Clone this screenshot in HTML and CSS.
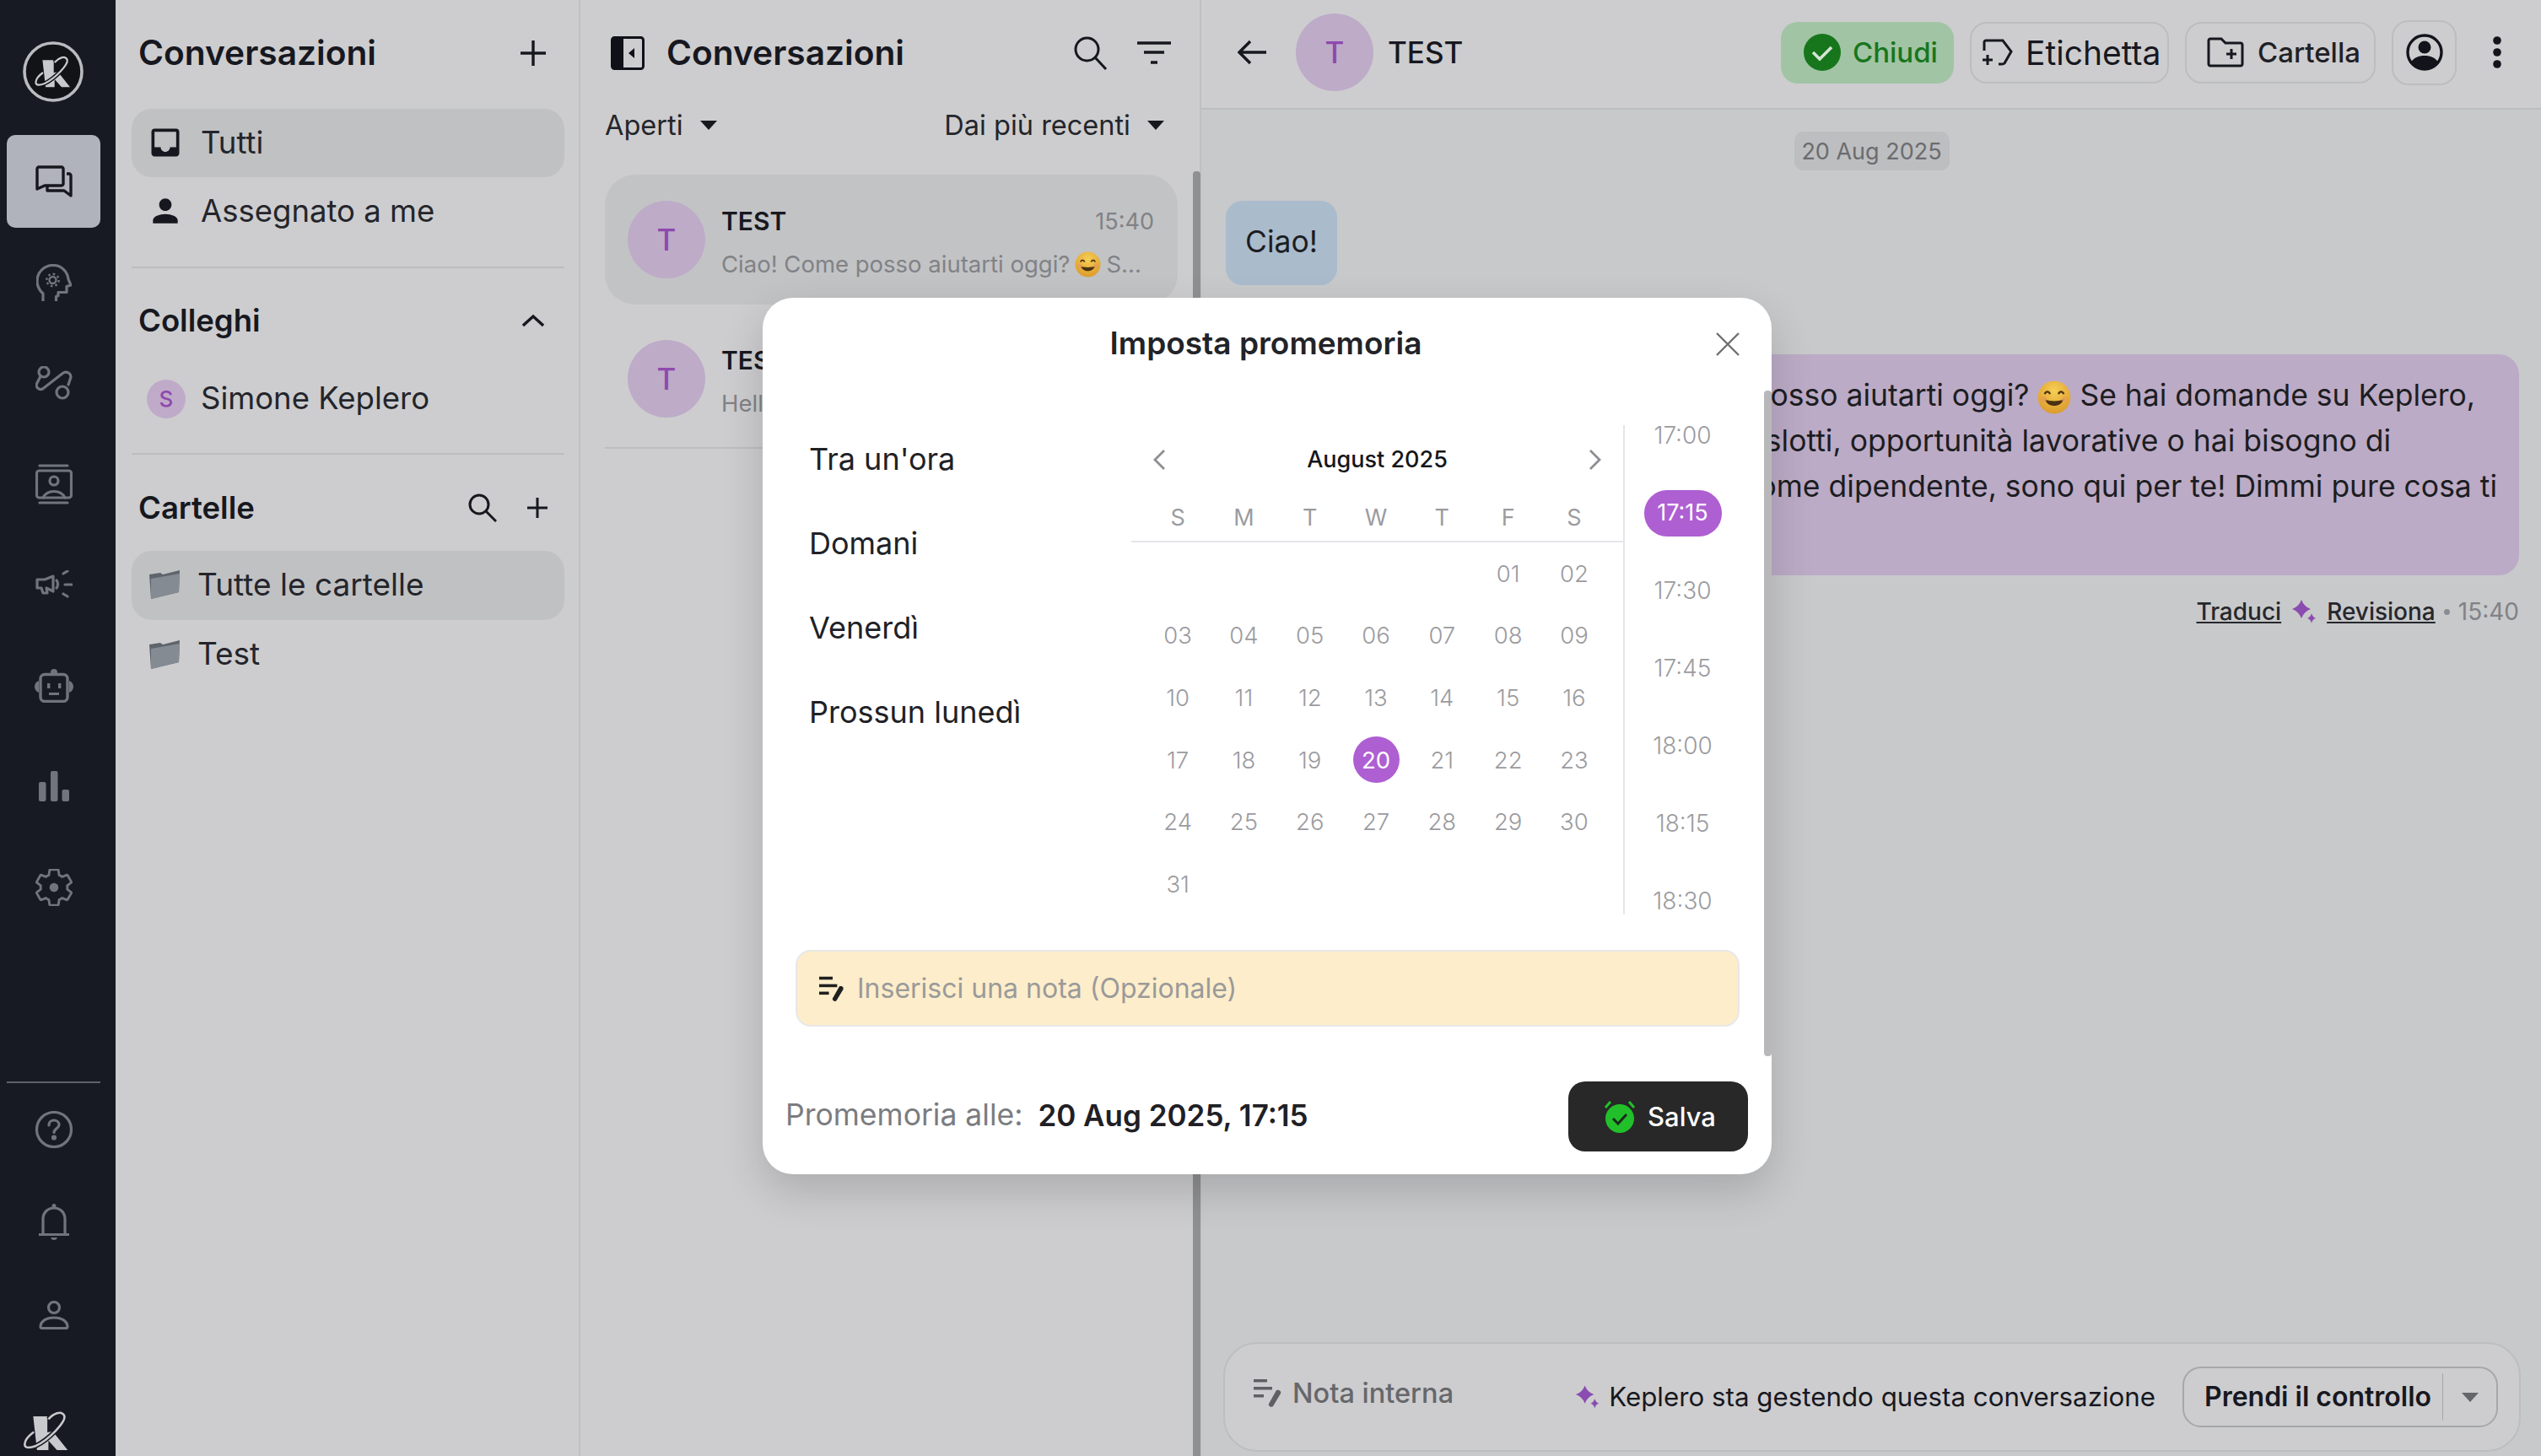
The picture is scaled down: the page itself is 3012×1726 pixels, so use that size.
FILE: index.html
```html
<!DOCTYPE html>
<html lang="it">
<head>
<meta charset="utf-8">
<title>Conversazioni</title>
<link rel="stylesheet" href="styles.css">
</head>
<body>
<div class="app">
  <nav class="rail">
    <svg class="rail-logo" width="72" height="72" viewBox="0 0 72 72"><circle cx="36" cy="36" r="34" fill="#121317" stroke="#b9bbc0" stroke-width="3.6"/><path d="M23.400 22.300h13.300v15l5-1 14.300 18h-10l-8.300-9.300v9.300H27z" fill="#c9cacd"/><path d="M37.700 25C42 20 50 16 52.700 22 54 28 38 44 26 50 18 53 14 52 16 46 17 43 20 40 24 37" fill="none" stroke="#121317" stroke-width="5"/><path d="M37.700 25C42 20 50 16 52.700 22 54 28 38 44 26 50 18 53 14 52 16 46 17 43 20 40 24 37" fill="none" stroke="#c9cacd" stroke-width="2.200"/></svg>
    <div class="rail-nav">
      <a class="rail-btn rail-btn-on"><svg width="44" height="38" viewBox="0 0 44 38" fill="none" stroke="#17181f" stroke-width="3.400" stroke-linejoin="round"><path d="M2 4c0-1 1-2 2-2h27c1 0 2 1 2 2v18c0 1-1 2-2 2H11l-9 4z"/><path d="M37 10h3c1 0 2 1 2 2v24l-8-6H14v-5" /></svg></a>
      <a class="rail-btn"><svg class="ri" width="42" height="44" viewBox="0 0 42 44"><path d="M8 43v-8C3.500 31 1 26 1 20 1 9 10 1.500 20 1.500c10 0 17 7.500 18 16.500l3 7-5 1.500v7H26v4l-2.500 1v5"/><circle class="ri-hub" cx="19.500" cy="19" r="4"/><circle class="ri-teeth" cx="19.500" cy="19" r="7.200"/></svg></a>
      <a class="rail-btn"><svg class="ri" width="44" height="40" viewBox="0 0 44 40"><circle cx="10" cy="7" r="6"/><circle cx="32" cy="31" r="7"/><path d="M6 12 1.500 21c-1.500 4 3 8 7 6L33 8c4-2.500 9 .5 9 5l-3 9"/></svg></a>
      <a class="rail-btn"><svg class="ri" width="44" height="48" viewBox="0 0 44 48"><path d="M5 2h33M5 46h33"/><rect x="1.500" y="8" width="41" height="32" rx="3"/><circle cx="22" cy="20" r="5"/><path d="M9 40c5-10 21-10 26 0"/></svg></a>
      <a class="rail-btn"><svg class="ri" width="44" height="34" viewBox="0 0 44 34"><path d="M11 11H2v10h5l2 6h5l-1-6 8 4V7z" /><path d="M25 12c2 2 2 7 0 9"/><path d="M33 4l5-3M35 17h8M33 28l5 3"/></svg></a>
      <a class="rail-btn"><svg width="46" height="40" viewBox="0 0 46 40" fill="#70757c"><rect x="7" y="6.500" width="32" height="32" rx="5" fill="none" stroke="#70757c" stroke-width="3.400"/><circle cx="23" cy="4" r="4"/><path d="M5 14C2 15 0 18 0 21s2 6 5 7zM41 14c3 1 5 4 5 7s-2 6-5 7z"/><rect x="15" y="17" width="3.400" height="6"/><rect x="28" y="17" width="3.400" height="6"/><rect x="17" y="28" width="12" height="3"/></svg></a>
      <a class="rail-btn"><svg width="36" height="36" viewBox="0 0 36 36" fill="#70757c"><rect x="0" y="13" width="8.500" height="23" rx="2"/><rect x="14" y="0" width="8.500" height="36" rx="2"/><rect x="27.500" y="22" width="8.500" height="14" rx="2"/></svg></a>
      <a class="rail-btn"><svg class="ri ri-gear" width="44" height="44" viewBox="2 2 20 20"><path d="M19.140 12.940c.04-.3.06-.61.06-.94 0-.32-.02-.64-.07-.94l2.030-1.580c.18-.14.23-.41.12-.61l-1.920-3.320c-.12-.22-.37-.29-.59-.22l-2.390.96c-.5-.38-1.030-.7-1.620-.94l-.36-2.540c-.04-.24-.24-.41-.48-.41h-3.840c-.24 0-.43.17-.47.41l-.36 2.540c-.59.24-1.130.57-1.620.94l-2.390-.96c-.22-.08-.47 0-.59.22L2.740 8.870c-.12.21-.08.47.12.61l2.030 1.580c-.05.3-.09.63-.09.94s.02.64.07.94l-2.030 1.580c-.18.14-.23.41-.12.61l1.920 3.320c.12.22.37.29.59.22l2.390-.96c.5.38 1.030.7 1.620.94l.36 2.540c.05.24.24.41.48.41h3.840c.24 0 .44-.17.47-.41l.36-2.540c.59-.24 1.130-.56 1.620-.94l2.390.96c.22.08.47 0 .59-.22l1.920-3.320c.12-.22.07-.47-.12-.61l-2.010-1.580z"/><circle cx="12" cy="12" r="2.400" fill="#70757c" stroke="none"/></svg></a>
    </div>
    <div class="rail-foot">
      <a class="rail-btn"><svg class="ri" width="44" height="44" viewBox="0 0 44 44"><circle cx="22" cy="22" r="20.500"/><path d="M16 17c0-4 3-6 6-6s6 2 6 5.500c0 4-6 4.500-6 9"/><circle cx="22" cy="31.500" r="1.500" fill="#70757c"/></svg></a>
      <a class="rail-btn"><svg class="ri" width="36" height="46" viewBox="0 0 36 46"><path d="M0 37.500h36"/><path d="M5 37V19C5 11 11 6 18 6s13 5 13 13v18"/><circle cx="18" cy="3.500" r="2.500" fill="#70757c" stroke="none"/><path d="M14 41h8c-1 4-7 4-8 0z" fill="#70757c" stroke="none"/></svg></a>
      <a class="rail-btn"><svg class="ri" width="36" height="34" viewBox="0 0 36 34"><circle cx="18" cy="8" r="6.500"/><path d="M2 31c0-7 7-11 16-11s16 4 16 11c0 1-1 1.500-2 1.500H4c-1 0-2-.5-2-1.500z"/></svg></a>
      <svg class="rail-mark" width="56" height="48" viewBox="13 16 44 38"><path d="M23.400 22.300h13.300v15l5-1 14.300 18h-10l-8.300-9.300v9.300H27z" fill="#c9cacd"/><path d="M37.700 25C42 20 50 16 52.700 22 54 28 38 44 26 50 18 53 14 52 16 46 17 43 20 40 24 37" fill="none" stroke="#181a23" stroke-width="4.500"/><path d="M37.700 25C42 20 50 16 52.700 22 54 28 38 44 26 50 18 53 14 52 16 46 17 43 20 40 24 37" fill="none" stroke="#c9cacd" stroke-width="2"/></svg>
    </div>
  </nav>

  <aside class="side">
    <div class="side-head">
      <h1 class="title">Conversazioni</h1>
      <svg class="si" width="34" height="34" viewBox="0 0 34 34"><path d="M17 2v30M2 17h30"/></svg>
    </div>
    <a class="side-row side-row-on"><svg width="44" height="44" viewBox="0 0 24 24" fill="#17181f"><path d="M19 3H5c-1.100 0-2 .9-2 2v14c0 1.100.9 2 2 2h14c1.100 0 2-.9 2-2V5c0-1.100-.9-2-2-2zm0 12h-4c0 1.660-1.350 3-3 3s-3-1.340-3-3H5V5h14v10z"/></svg><span>Tutti</span></a>
    <a class="side-row"><svg width="44" height="44" viewBox="0 0 24 24" fill="#17181f"><path d="M12 12c2.210 0 4-1.790 4-4s-1.790-4-4-4-4 1.790-4 4 1.790 4 4 4zm0 2c-2.670 0-8 1.340-8 4v2h16v-2c0-2.660-5.330-4-8-4z"/></svg><span>Assegnato a me</span></a>
    <hr class="rule rule-a">
    <div class="sec-head sec-head-a">
      <h2 class="sec-title">Colleghi</h2>
      <svg class="si" width="26" height="16" viewBox="0 0 26 16"><path d="M1 14 13 3l12 11"/></svg>
    </div>
    <a class="side-row"><span class="mini-ava">S</span><span>Simone Keplero</span></a>
    <hr class="rule rule-b">
    <div class="sec-head sec-head-b">
      <h2 class="sec-title">Cartelle</h2>
      <span class="sec-tools">
        <svg class="si si-thin" width="34" height="34" viewBox="0 0 34 34"><circle cx="13" cy="13" r="11"/><path d="m21 21 12 12"/></svg>
        <svg class="si si-thin" width="26" height="26" viewBox="0 0 26 26"><path d="M13 1v24M1 13h24"/></svg>
      </span>
    </div>
    <a class="side-row side-row-on folder"><svg width="38" height="36" viewBox="0 0 38 36"><path d="M1 7l13-2 3 2 20-5-1 26-33 8z" fill="#5e646c"/><path d="M3 12l34-6-1 22-33 8z" fill="#858b93"/></svg><span>Tutte le cartelle</span></a>
    <a class="side-row folder"><svg width="38" height="36" viewBox="0 0 38 36"><path d="M1 7l13-2 3 2 20-5-1 26-33 8z" fill="#5e646c"/><path d="M3 12l34-6-1 22-33 8z" fill="#858b93"/></svg><span>Test</span></a>
  </aside>

  <section class="list">
    <div class="list-head">
      <svg width="40" height="40" viewBox="0 0 40 40"><rect x="1.500" y="1.500" width="37" height="37" rx="3" fill="none" stroke="#101118" stroke-width="3"/><path d="M2 2h13v36H2z" fill="#101118"/><path d="M28 14v12l-7-6z" fill="#101118"/></svg>
      <h1 class="title list-title">Conversazioni</h1>
      <svg class="si si-thin list-search" width="40" height="40" viewBox="0 0 40 40"><circle cx="15.500" cy="15.500" r="13.500"/><path d="m25 25 13 14"/></svg>
      <svg class="si list-filter" width="40" height="28" viewBox="0 0 40 28"><path d="M0 2h40M8 13h24M16 25h8"/></svg>
    </div>
    <div class="list-filters">
      <span class="drop">Aperti<i class="caret"></i></span>
      <span class="drop">Dai più recenti<i class="caret"></i></span>
    </div>
    <article class="conv conv-on">
      <span class="ava">T</span>
      <div class="conv-main">
        <div class="conv-top"><b>TEST</b><time>15:40</time></div>
        <p class="conv-text">Ciao! Come posso aiutarti oggi? <svg class="emo" width="31" height="31" viewBox="0 0 32 32"><use href="#smile"/></svg> S...</p>
      </div>
    </article>
    <article class="conv conv-last">
      <span class="ava">T</span>
      <div class="conv-main">
        <div class="conv-top"><b>TEST</b></div>
        <p class="conv-text">Hello</p>
      </div>
    </article>
    <i class="list-scroll"></i>
  </section>

  <main class="chat">
    <header class="chat-head">
      <svg class="si back" width="34" height="30" viewBox="0 0 34 30"><path d="M15 2 2 15l13 13M2 15h32"/></svg>
      <span class="ava">T</span>
      <h2 class="chat-name">TEST</h2>
      <div class="chat-actions">
        <button class="btn btn-close"><svg width="44" height="44" viewBox="0 0 44 44"><circle cx="22" cy="22" r="22" fill="#17761b"/><path d="m11 22 8 8 14-14" fill="none" stroke="#d5e6d5" stroke-width="3.600"/></svg>Chiudi</button>
        <button class="btn btn-tag"><svg class="si si-icon" width="36" height="32" viewBox="0 0 36 32"><path d="M2 14V4c0-1 1-2 2-2h20l10 13-8 14c-1 1-2 1-3 1h-4"/><path d="M6 19v12M0 25h12"/></svg>Etichetta</button>
        <button class="btn btn-dir"><svg class="si si-icon" width="44" height="36" viewBox="0 0 44 36"><path d="M2 4c0-1 1-2 2-2h13l5 5h18c1 0 2 1 2 2v23c0 1-1 2-2 2H4c-1 0-2-1-2-2z"/><path d="M29 14v12M23 20h12"/></svg>Cartella</button>
        <button class="btn btn-user"><svg width="44" height="44" viewBox="0 0 44 44"><circle cx="22" cy="22" r="20" fill="none" stroke="#13141b" stroke-width="3.400"/><circle cx="22" cy="16" r="7.500" fill="#13141b"/><path d="M5 35c4-7 10-9 17-9s13 2 17 9c-4 5-10 8-17 8S9 40 5 35z" fill="#13141b"/></svg></button>
        <svg class="dots" width="12" height="38" viewBox="0 0 12 38" fill="#13141b"><circle cx="6" cy="5" r="4.800"/><circle cx="6" cy="19" r="4.800"/><circle cx="6" cy="33" r="4.800"/></svg>
      </div>
    </header>
    <div class="thread">
      <span class="date-pill">20 Aug 2025</span>
      <div class="bubble bubble-in">Ciao!</div>
      <div class="bubble bubble-out">
        <div class="line line-1">Ciao! Come posso aiutarti oggi? <svg class="emo emo-big" width="40" height="40" viewBox="0 0 32 32"><use href="#smile"/></svg> Se hai domande su Keplero,</div>
        <div class="line line-2">sugli slotti, opportunità lavorative o hai bisogno di</div>
        <div class="line line-3">supporto come dipendente, sono qui per te! Dimmi pure cosa ti</div>
      </div>
      <div class="meta"><u>Traduci</u><svg class="spark" width="30" height="30" viewBox="0 0 30 30" fill="#8a4cb0"><path d="M12 1Q15 9 23 12 15 15 12 23 9 15 1 12 9 9 12 1zM24 17Q25 21 29 23 25 24 24 29 23 24 19 23 23 21 24 17z"/></svg><u>Revisiona</u><i class="meta-dot"></i><time>15:40</time></div>
    </div>
    <div class="composer">
      <span class="note-tab"><svg width="36" height="36" viewBox="0 0 36 36" fill="#5f6063"><rect x="0" y="2" width="16" height="3.500"/><rect x="0" y="11" width="22" height="3.500"/><rect x="0" y="20" width="12" height="3.500"/><path d="M27 15c3-1 6 1 5 4L23 34c-2 2-6 0-5-3z"/></svg>Nota interna</span>
      <span class="ai-state"><svg width="40" height="38" viewBox="0 0 30 30" fill="#8a4cb0"><path d="M12 1Q15 9 23 12 15 15 12 23 9 15 1 12 9 9 12 1zM24 17Q25 21 29 23 25 24 24 29 23 24 19 23 23 21 24 17z"/></svg>Keplero sta gestendo questa conversazione</span>
      <div class="take"><span class="take-label">Prendi il controllo</span><span class="take-more"><i class="caret caret-grey"></i></span></div>
    </div>
  </main>
</div>

<div class="modal" role="dialog">
  <div class="modal-head">
    <h2 class="modal-title">Imposta promemoria</h2>
    <svg class="modal-close" width="28" height="28" viewBox="0 0 28 28"><path d="m1 1 26 26M27 1 1 27"/></svg>
  </div>
  <div class="modal-body">
    <ul class="quick">
      <li>Tra un'ora</li>
      <li>Domani</li>
      <li>Venerdì</li>
      <li>Prossun lunedì</li>
    </ul>
    <div class="cal">
      <div class="cal-head">
        <svg class="chev" width="16" height="26" viewBox="0 0 16 26"><path d="M14 2 3 13l11 11"/></svg>
        <span class="cal-month">August 2025</span>
        <svg class="chev" width="16" height="26" viewBox="0 0 16 26"><path d="m2 2 11 11L2 24"/></svg>
      </div>
      <div class="cal-week"><span>S</span><span>M</span><span>T</span><span>W</span><span>T</span><span>F</span><span>S</span></div>
      <div class="cal-days">
        <span></span><span></span><span></span><span></span><span></span><span>01</span><span>02</span>
        <span>03</span><span>04</span><span>05</span><span>06</span><span>07</span><span>08</span><span>09</span>
        <span>10</span><span>11</span><span>12</span><span>13</span><span>14</span><span>15</span><span>16</span>
        <span>17</span><span>18</span><span>19</span><span><b class="day-on">20</b></span><span>21</span><span>22</span><span>23</span>
        <span>24</span><span>25</span><span>26</span><span>27</span><span>28</span><span>29</span><span>30</span>
        <span>31</span>
      </div>
    </div>
    <div class="times">
      <span>17:00</span>
      <span><b class="time-on">17:15</b></span>
      <span>17:30</span>
      <span>17:45</span>
      <span>18:00</span>
      <span>18:15</span>
      <span>18:30</span>
    </div>
  </div>
  <div class="modal-note"><svg width="32" height="32" viewBox="0 0 36 36" fill="#1f1f1f"><rect x="0" y="2" width="18" height="4"/><rect x="0" y="12" width="24" height="4"/><rect x="0" y="22" width="13" height="4"/><path d="M27 15c3-1 6 1 5 4L23 34c-2 2-6 0-5-3z"/></svg><span>Inserisci una nota (Opzionale)</span></div>
  <div class="modal-foot">
    <span class="when-label">Promemoria alle:</span>
    <span class="when-value">20 Aug 2025, 17:15</span>
    <button class="save"><svg width="40" height="40" viewBox="0 0 40 40"><path d="M3 9l6-7M37 9l-6-7" stroke="#21c02a" stroke-width="3" fill="none"/><circle cx="20" cy="22" r="17" fill="#21c02a"/><path d="m12 22 6 6 10-11" fill="none" stroke="#1d2a1d" stroke-width="3"/></svg>Salva</button>
  </div>
  <i class="modal-scroll"></i>
</div>

<svg class="defs" width="0" height="0" aria-hidden="true"><defs>
  <radialGradient id="emoFill" cx=".5" cy=".3" r=".8"><stop offset="0" stop-color="#f6cf55"/><stop offset="1" stop-color="#d99425"/></radialGradient>
  <symbol id="smile" viewBox="0 0 32 32"><circle cx="16" cy="16" r="15.500" fill="url(#emoFill)"/><path d="M7 13c1-3 4-3 5 0M20 13c1-3 4-3 5 0" fill="none" stroke="#4a3213" stroke-width="1.800"/><path d="M7 18c3 8 15 8 18 0-5 2-13 2-18 0z" fill="#4a3213"/><circle cx="6" cy="18" r="3" fill="#e59a5c" opacity=".6"/><circle cx="26" cy="18" r="3" fill="#e59a5c" opacity=".6"/></symbol>
</defs></svg>
</body>
</html>
```
FILE: styles.css
```css
* { box-sizing: border-box; }
html, body { margin: 0; height: 100%; }
body {
  position: relative;
  width: 3012px;
  height: 1726px;
  overflow: hidden;
  background: #cdcdcf;
  font-family: Inter, "Liberation Sans", sans-serif;
  color: #17181f;
}
h1, h2, p, ul { margin: 0; padding: 0; list-style: none; }
button { font: inherit; color: inherit; background: none; border: 0; padding: 0; }
.defs { position: absolute; }

.app { display: grid; grid-template-columns: 137px 551px 736px 1fr; height: 1726px; }

/* rail */
.rail { background: #181a23; display: flex; flex-direction: column; align-items: flex-start; height: 1726px; overflow: hidden; padding-left: 8px; }
.rail-logo { margin: 49px 0 39px 19px; flex: none; }
.rail-nav { display: flex; flex-direction: column; gap: 9.500px; }
.rail-btn { width: 111px; height: 110px; display: flex; align-items: center; justify-content: center; border-radius: 10px; flex: none; }
.rail-btn-on { background: #b0b3bb; }
.ri { fill: none; stroke: #70757c; stroke-width: 3.200; stroke-linejoin: round; stroke-linecap: round; }
.ri-gear { stroke-width: 1.300; }
.ri-hub { stroke-width: 2.400; }
.ri-teeth { stroke-width: 2.400; stroke-dasharray: 2.600 3.050; stroke-linecap: butt; }
.rail-foot { margin-top: auto; border-top: 2px solid #5d626b; display: flex; flex-direction: column; width: 111px; height: 444px; }
.rail-mark { margin: 57px 0 0 18px; flex: none; }

/* side panel */
.side { border-right: 2px solid #bfc0c2; padding: 0 17px 0 19px; }
.side-head { height: 129px; padding: 0 20px 3px 8px; display: flex; align-items: center; justify-content: space-between; }
.title { font-size: 40.700px; font-weight: 600; line-height: 50px; }
.si { fill: none; stroke: #17181f; stroke-width: 3.400; flex: none; }
.si-thin { stroke-width: 3; }
.side-row { display: flex; align-items: center; gap: 20px; height: 81px; padding: 0 0 2px 18px; font-size: 36.500px; border-radius: 24px; color: #24252b; }
.side-row-on { background: #c0c1c3; }
.folder { height: 82px; padding-left: 20px; padding-bottom: 4px; font-size: 37px; }
.folder + .folder { height: 81px; padding-bottom: 2px; }
.rule { border: 0; height: 2px; background: #bdbdc0; margin: 0; }
.rule-a { margin-top: 25px; }
.rule-b { margin-top: 24px; }
.sec-head { display: flex; align-items: center; justify-content: space-between; height: 48px; padding: 0 24px 1px 8px; }
.sec-head-a { margin: 38px 0 28px; }
.sec-head-b { margin: 39px 0 27px; padding-right: 19px; }
.sec-title { font-size: 36.500px; font-weight: 600; }
.sec-tools { display: flex; align-items: center; gap: 35px; }
.mini-ava { width: 46px; height: 46px; border-radius: 50%; background: #bfabc9; color: #8e49ad; font-size: 26px; font-weight: 500; display: flex; align-items: center; justify-content: center; margin: 2px -2px 0 0; }

/* list */
.list { position: relative; border-right: 2px solid #bfc0c2; padding: 0 0 0 29px; }
.list-head { height: 126px; display: flex; align-items: center; padding-left: 7px; }
.list-title { margin-left: 26px; }
.list-search { margin-left: 201px; }
.list-filter { margin-left: 35px; }
.list-filters { display: flex; justify-content: space-between; height: 44px; align-items: center; width: 663px; font-size: 32.500px; margin-bottom: 37px; color: #24252b; }
.drop { display: flex; align-items: center; gap: 20px; }
.caret { width: 0; height: 0; border: 10px solid transparent; border-top: 11px solid #17181f; border-bottom: 0; display: block; }
.conv { display: flex; width: 679px; padding: 31px 28px 0 27px; height: 154px; gap: 19px; border-radius: 36px; }
.conv-on { background: #c2c3c5; }
.conv-last { height: 171px; border-bottom: 2px solid #bdbdc0; border-radius: 0; padding-top: 42px; }
.ava { width: 92px; height: 92px; flex: none; border-radius: 50%; background: #bdabc8; color: #8e49ad; font-size: 35px; font-weight: 500; display: flex; align-items: center; justify-content: center; }
.conv-main { flex: 1; min-width: 0; padding-top: 2px; }
.conv-top { display: flex; justify-content: space-between; align-items: center; height: 44px; font-size: 30px; }
.conv-top b { font-weight: 600; }
.conv-top time { font-size: 27px; color: #818286; }
.conv-text { font-size: 27.500px; color: #818286; margin-top: 9px; line-height: 40px; white-space: nowrap; display: flex; align-items: center; gap: 6px; }
.emo { flex: none; vertical-align: -6px; }
.emo-big { vertical-align: -10px; }
.list-scroll { position: absolute; left: 726px; top: 203px; bottom: 0; width: 9px; background: #8f9092; border-radius: 4px 4px 0 0; }

/* chat */
.chat { display: flex; flex-direction: column; min-width: 0; background: #c8c9cb; height: 1726px; }
.chat-head { flex: none; height: 130px; background: #cdcdcf; border-bottom: 2px solid #bcbdbf; display: flex; align-items: center; padding: 0 0 4px 43px; }
.back { margin-right: 35px; }
.chat-name { font-size: 35px; font-weight: 500; margin-left: 17px; }
.chat-actions { margin-left: auto; display: flex; align-items: center; gap: 19px; padding-right: 46px; }
.btn { height: 73px; border-radius: 20px; border: 2px solid #bcbdbf; display: flex; align-items: center; font-size: 36px; }
.btn-close { width: 205px; background: #a1c4a5; border: 0; color: #17761b; gap: 14px; padding-left: 27px; font-size: 33px; font-weight: 500; }
.btn-tag { width: 236px; gap: 15px; padding-left: 13px; font-size: 39px; }
.btn-dir { width: 226px; gap: 16px; padding-left: 24px; font-size: 33px; font-weight: 500; color: #1f2026; }
.si-icon { stroke-width: 3; }
.btn-user { width: 77px; height: 77px; justify-content: center; }
.dots { margin-left: 23px; }
.thread { flex: 1; display: flex; flex-direction: column; padding: 26px 26px 0 29px; min-height: 0; }
.date-pill { align-self: center; height: 46px; width: 184px; margin-left: -2px; border-radius: 10px; background: #bdbec0; color: #6b6c70; font-size: 27px; display: flex; align-items: center; justify-content: center; }
.bubble { color: #1c1d22; font-size: 35.500px; }
.bubble-in { margin-top: 36px; width: 132px; height: 100px; background: #aabbcc; border-radius: 20px; display: flex; align-items: center; justify-content: center; padding-bottom: 3px; }
.bubble-out { align-self: flex-end; margin-top: 82px; width: 1240px; height: 262px; background: #bcabc6; border-radius: 24px; padding-top: 22px; }
.line { height: 54px; line-height: 54px; text-align: right; white-space: nowrap; overflow: hidden; }
.line-1 { padding-right: 52px; }
.line-2 { padding-right: 152px; }
.line-3 { padding-right: 26px; }
.meta { align-self: flex-end; margin-top: 26px; display: flex; align-items: center; height: 34px; font-size: 28px; color: #26272c; }
.meta u { font-weight: 500; }
.spark { margin: 0 12px; }
.meta-dot { width: 7px; height: 7px; border-radius: 50%; background: #8b8c90; margin: 0 10px; }
.meta time { color: #818286; }
.composer { flex: none; height: 130px; margin: 0 24px 5px 26px; background: #cdcdcf; border: 2px solid #bdbec0; border-radius: 40px; display: flex; align-items: center; padding-left: 34px; }
.note-tab { display: flex; align-items: center; gap: 10px; font-size: 32.500px; font-weight: 500; color: #66676b; margin-top: -10px; width: 375px; flex: none; }
.ai-state { display: flex; align-items: center; gap: 11px; font-size: 31.300px; width: 688px; flex: none; white-space: nowrap; margin-left: 6px; }
.take { margin-left: 32px; width: 374px; height: 72px; flex: none; border: 2px solid #a6a7a9; border-radius: 22px; display: flex; align-items: center; font-size: 32px; font-weight: 600; white-space: nowrap; }
.take-label { padding-left: 24px; width: 307px; height: 56px; line-height: 56px; border-right: 1px solid #a6a7a9; }
.take-more { flex: 1; display: flex; justify-content: center; }
.caret-grey { border-top-color: #65666a; }

/* modal */
.modal { position: absolute; left: 904px; top: 353px; width: 1196px; height: 1039px; background: #fff; border-radius: 36px; box-shadow: 0 20px 50px rgba(0,0,0,.16); color: #202126; }
.modal-head { height: 151px; padding-top: 28px; position: relative; text-align: center; }
.modal-title { font-size: 37px; font-weight: 600; line-height: 52px; color: #222328; margin-left: -3px; }
.modal-close { position: absolute; right: 38px; top: 41px; fill: none; stroke: #6e6f73; stroke-width: 2.400; }
.modal-body { display: flex; height: 580px; }
.quick { width: 437px; padding: 0 0 0 55px; margin-top: -10px; font-size: 36px; }
.quick li { height: 100px; line-height: 100px; }
.cal { width: 585px; border-right: 2px solid #e5e5ea; }
.cal-head { height: 81px; display: flex; align-items: center; justify-content: space-between; padding: 0 25px; }
.chev { fill: none; stroke: #8d8e92; stroke-width: 2.800; }
.cal-month { font-size: 27px; color: #15161b; font-weight: 500; }
.cal-week { height: 58px; border-bottom: 2px solid #e5e5ea; display: grid; grid-template-columns: repeat(7, 78.300px); padding: 0 16px; align-items: center; justify-items: center; font-size: 27px; color: #9b9b9f; }
.cal-days { display: grid; grid-template-columns: repeat(7, 78.300px); grid-auto-rows: 73.600px; padding: 0 16px; align-items: center; justify-items: center; font-size: 27.500px; color: #9b9b9f; font-weight: 300; }
.day-on { display: flex; width: 55px; height: 55px; border-radius: 50%; background: #ae5fd2; color: #fff; font-weight: 400; align-items: center; justify-content: center; }
.times { width: 137px; font-size: 28px; color: #9b9b9f; font-weight: 300; display: flex; flex-direction: column; align-items: center; gap: 68px; }
.times span { flex: none; height: 24px; line-height: 24px; display: flex; align-items: center; }
.time-on { display: flex; flex: none; width: 92px; height: 55px; border-radius: 27px; background: #ae5fd2; color: #fff; font-weight: 400; font-size: 27px; align-items: center; justify-content: center; }
.modal-note { margin: 42px 38px 0 39px; height: 91px; background: #fdedca; border: 2px solid #e8e8e8; border-radius: 18px; display: flex; align-items: center; gap: 13px; padding: 0 0 0 26px; font-size: 32px; color: #9a9a9a; }
.modal-foot { display: flex; align-items: center; margin-top: 65px; padding: 0 28px 0 27px; height: 83px; }
.when-label { font-size: 35.500px; color: #7b7c80; margin-bottom: 4px; }
.when-value { font-size: 35px; font-weight: 600; color: #1f2025; margin: 0 0 4px 18px; }
.save { margin-left: auto; width: 213px; height: 83px; background: #282828; color: #fff; border-radius: 20px; display: flex; align-items: center; gap: 13px; padding-left: 41px; font-size: 31px; font-weight: 500; }
.modal-scroll { position: absolute; right: 0; top: 110px; width: 9px; height: 789px; background: #b8b8ba; border-radius: 4px; }
```
